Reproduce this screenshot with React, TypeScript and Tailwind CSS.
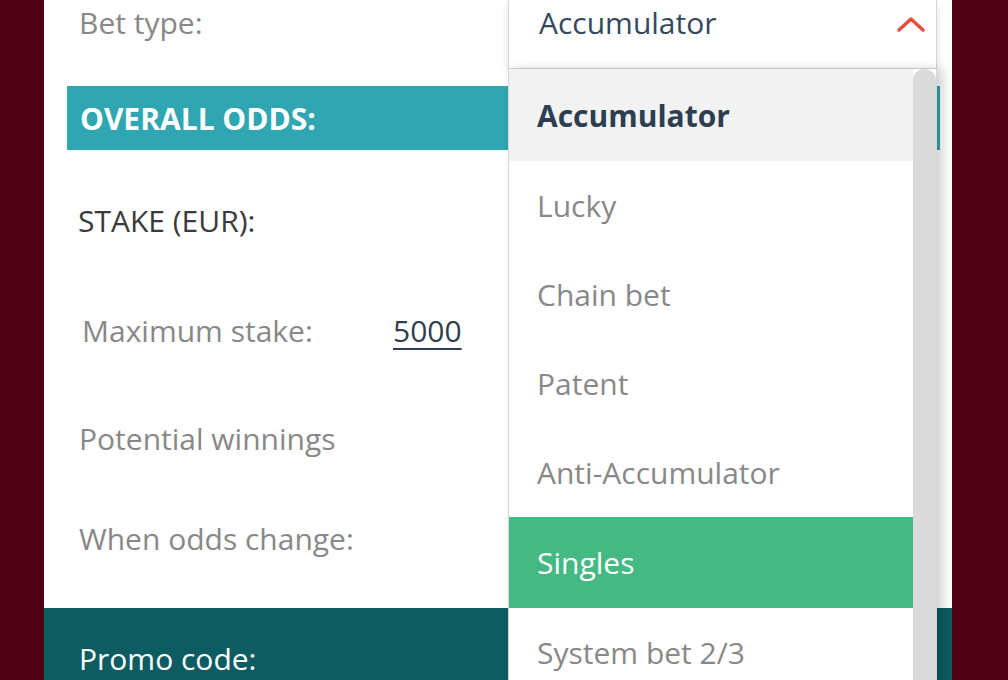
const options = [
  "Accumulator",
  "Lucky",
  "Chain bet",
  "Patent",
  "Anti-Accumulator",
  "Singles",
  "System bet 2/3",
];

function Dropdown() {
  return (
    <div className="absolute left-[464px] top-[69px] z-10 flex h-[640px] w-[429px] border-l border-r border-[#d6d6d6] bg-white shadow-[6px_0_10px_rgba(0,0,0,0.18)]">
      <div className="flex flex-1 flex-col">
        {options.map((opt, i) => {
          const first = i === 0;
          const active = opt === "Singles";
          return (
            <div
              key={opt}
              className={`flex shrink-0 items-center px-7 ${
                first
                  ? "h-[92px] bg-[#f2f2f2] font-bold text-[#2c3e50]"
                  : active
                    ? "h-[91px] bg-[#45b983] text-white"
                    : "h-[89px] text-[#888888]"
              }`}
            >
              {opt}
            </div>
          );
        })}
      </div>
      <div className="w-[23px] rounded-t-full bg-[#dadada]" />
    </div>
  );
}

function Row({ children, h }: { children: React.ReactNode; h: string }) {
  return <div className={`flex shrink-0 items-center ${h}`}>{children}</div>;
}

export default function App() {
  return (
    <div
      className="flex h-[680px] w-[1008px] overflow-hidden bg-[#4f0012] text-[30px]"
      style={{ fontFamily: '"Open Sans", "Noto Sans", sans-serif' }}
    >
      <div className="relative ml-[44px] flex w-[908px] flex-col bg-white">
        <div className="flex h-[69px] shrink-0 items-start">
          <div className="flex h-[44px] w-[464px] items-center pl-[35px] text-[#888888]">
            Bet type:
          </div>
          <div className="flex h-[69px] w-[429px] items-start justify-between border-b border-l border-r border-[#d6d6d6] bg-white pl-[30px] pr-[10px] shadow-[0_4px_8px_rgba(0,0,0,0.12)]">
            <span className="flex h-[44px] items-center text-[#34495e]">Accumulator</span>
            <svg width="30" height="18" viewBox="0 0 30 18" className="mt-[15px]" fill="none">
              <polyline
                points="3,15 15,4 27,15"
                stroke="#e74c3c"
                strokeWidth="3.5"
                strokeLinecap="round"
                strokeLinejoin="round"
              />
            </svg>
          </div>
        </div>
        <div className="ml-[23px] mr-[12px] mt-[17px] flex h-[64px] shrink-0 items-center bg-[#2fa6b1] pl-[13px] font-bold text-white">
          OVERALL ODDS:
        </div>
        <Row h="h-[140px] pl-[34px] text-[#3a3a3a]">STAKE (EUR):</Row>
        <Row h="h-[80px] pl-[38px] text-[#888888]">
          <span className="w-[311px]">Maximum stake:</span>
          <span className="text-[#2c3e50] underline underline-offset-[6px] decoration-2">5000</span>
        </Row>
        <Row h="h-[136px] pl-[35px] text-[#888888]">Potential winnings</Row>
        <Row h="h-[64px] pl-[35px] text-[#888888]">When odds change:</Row>
        <div className="mt-[38px] flex h-[100px] shrink-0 items-start bg-[#0c5c62] pl-[35px] pt-[28px] text-white">
          Promo code:
        </div>
        <Dropdown />
      </div>
    </div>
  );
}
